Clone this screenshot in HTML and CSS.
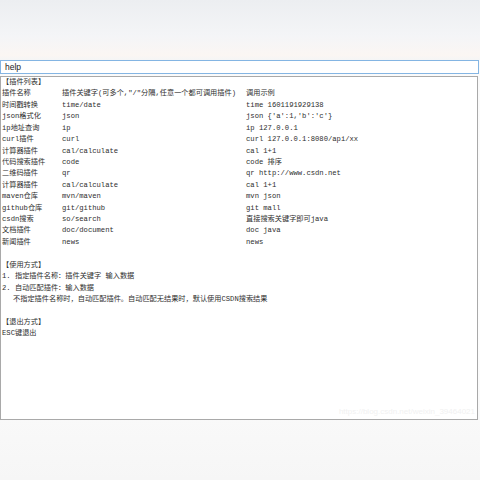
FILE: index.html
```html
<!DOCTYPE html>
<html lang="zh">
<head>
<meta charset="utf-8">
<title>help</title>
<link rel="stylesheet" href="styles.css">
</head>
<body>
<div class="top"></div>
<div class="search"><span class="query">help</span></div>
<div class="panel">
  <div class="line">【插件列表】</div>
  <div class="table">
    <span>插件名称</span><span>插件关键字(可多个,"/"分隔,任意一个都可调用插件)</span><span>调用示例</span>
    <span>时间戳转换</span><span>time/date</span><span>time 1601191929138</span>
    <span>json格式化</span><span>json</span><span>json {'a':1,'b':'c'}</span>
    <span>ip地址查询</span><span>ip</span><span>ip 127.0.0.1</span>
    <span>curl插件</span><span>curl</span><span>curl 127.0.0.1:8080/api/xx</span>
    <span>计算器插件</span><span>cal/calculate</span><span>cal 1+1</span>
    <span>代码搜索插件</span><span>code</span><span>code 排序</span>
    <span>二维码插件</span><span>qr</span><span>qr http://www.csdn.net</span>
    <span>计算器插件</span><span>cal/calculate</span><span>cal 1+1</span>
    <span>maven仓库</span><span>mvn/maven</span><span>mvn json</span>
    <span>github仓库</span><span>git/github</span><span>git mall</span>
    <span>csdn搜索</span><span>so/search</span><span>直接搜索关键字即可java</span>
    <span>文档插件</span><span>doc/document</span><span>doc java</span>
    <span>新闻插件</span><span>news</span><span>news</span>
  </div>
  <div class="blank"></div>
  <div class="line">【使用方式】</div>
  <div class="line">1. 指定插件名称：插件关键字 输入数据</div>
  <div class="line">2. 自动匹配插件：输入数据</div>
  <div class="line indent">不指定插件名称时，自动匹配插件。自动匹配无结果时，默认使用CSDN搜索结果</div>
  <div class="blank"></div>
  <div class="line">【退出方式】</div>
  <div class="line">ESC键退出</div>
  <div class="mark">https://blog.csdn.net/weixin_39464021</div>
</div>
</body>
</html>
```
FILE: styles.css
```css
html, body {
  margin: 0;
  padding: 0;
}
body {
  width: 480px;
  height: 480px;
  overflow: hidden;
  background: linear-gradient(#f9f9f9, #fdfdfd 70%, #f6f6f6);
  font-family: "Liberation Mono", "Noto Sans CJK SC", monospace;
  font-size: 7.2px;
  color: #2e2e2e;
}
.top {
  height: 60px;
  background: linear-gradient(#eceef1, #f4f5f7 60%, #fbf6f3 92%, #f5f5f5);
}
.search {
  box-sizing: border-box;
  height: 14px;
  width: 479px;
  border: 1px solid #84b5e3;
  background: #fff;
  display: flex;
  align-items: center;
  padding-left: 4px;
}
.query {
  font-family: "Liberation Sans", Arial, sans-serif;
  font-size: 8.5px;
  color: #222;
}
.panel {
  position: relative;
  box-sizing: border-box;
  margin-top: 2px;
  width: 478px;
  height: 344px;
  border: 1px solid #a9a9a9;
  background: #fff;
  padding-left: 1px;
}
.line {
  height: 11.43px;
  line-height: 11.43px;
  white-space: pre;
}
.indent {
  padding-left: 11px;
}
.blank {
  height: 11.43px;
}
.table {
  display: grid;
  grid-template-columns: 60px 184px 1fr;
  grid-auto-rows: 11.43px;
  line-height: 11.43px;
  white-space: pre;
}
.mark {
  position: absolute;
  right: 2px;
  bottom: 3px;
  font-family: "Liberation Sans", Arial, sans-serif;
  font-size: 8px;
  color: #f1f1f1;
}
```
